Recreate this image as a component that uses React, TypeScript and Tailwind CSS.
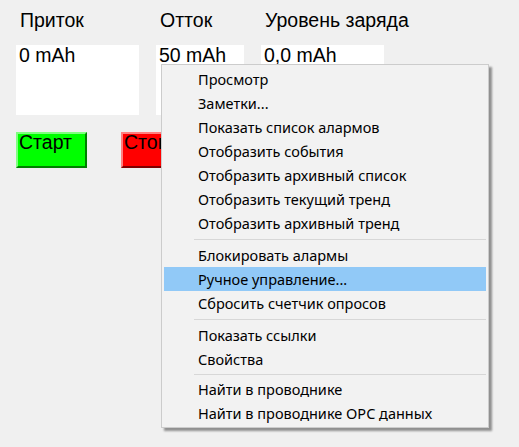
import React from 'react';

type Entry = { label: string; active?: boolean } | { sep: number };

const menu: Entry[] = [
  { label: 'Просмотр' },
  { label: 'Заметки...' },
  { label: 'Показать список алармов' },
  { label: 'Отобразить события' },
  { label: 'Отобразить архивный список' },
  { label: 'Отобразить текущий тренд' },
  { label: 'Отобразить архивный тренд' },
  { sep: 8 },
  { label: 'Блокировать алармы' },
  { label: 'Ручное управление...', active: true },
  { label: 'Сбросить счетчик опросов' },
  { sep: 8 },
  { label: 'Показать ссылки' },
  { label: 'Свойства' },
  { sep: 6 },
  { label: 'Найти в проводнике' },
  { label: 'Найти в проводнике OPC данных' },
];

const ContextMenu: React.FC = () => (
  <div
    className="absolute left-[161px] top-[64px] w-[328px] border border-[#cccccc] bg-[#f2f2f2] p-[2px] shadow-[3px_3px_2px_rgba(0,0,0,0.4)]"
    style={{ fontFamily: '"Noto Sans", sans-serif' }}
  >
    {menu.map((item, i) =>
      'sep' in item ? (
        <div key={i} className="flex items-center pl-[30px]" style={{ height: item.sep }}>
          <div className="h-px w-full bg-[#d7d7d7]" />
        </div>
      ) : (
        <div
          key={i}
          className={`flex h-[24px] items-center pl-[34px] pt-[2px] text-[14.5px] text-black ${
            item.active ? 'bg-[#91c9f7]' : ''
          }`}
        >
          {item.label}
        </div>
      )
    )}
  </div>
);

export default function App() {
  return (
    <div
      className="relative h-[447px] w-[519px] overflow-hidden bg-[#f0f0f0] text-black"
      style={{ fontFamily: '"Liberation Sans", Arial, sans-serif' }}
    >
      <div className="flex gap-[17px] pl-[16px] pt-[8px]">
        {/* Приток */}
        <div className="flex w-[123px] flex-col">
          <div className="h-[37px] pl-[4px] text-[19.5px] leading-[24px]">Приток</div>
          <div className="h-[70px] bg-white pl-[3px] text-[19.5px] leading-[20px]">0 mAh</div>
          <div className="mt-[17px] h-[36px] w-[71px] border-2 border-t-[#80ff80] border-l-[#80ff80] border-b-[#008000] border-r-[#008000] bg-[#00ff00] pl-[1px] text-[19.5px] leading-[17px]">
            Старт
          </div>
        </div>
        {/* Отток */}
        <div className="flex w-[88px] flex-col">
          <div className="h-[37px] pl-[4px] text-[19.5px] leading-[24px]">Отток</div>
          <div className="h-[70px] bg-white pl-[3px] text-[19.5px] leading-[20px]">50 mAh</div>
          <div className="-ml-[35px] mt-[17px] h-[36px] w-[71px] border-2 border-t-[#ff8080] border-l-[#ff8080] border-b-[#800000] border-r-[#800000] bg-[#ff0000] pl-[1px] text-[19.5px] leading-[17px]">
            Стоп
          </div>
        </div>
        {/* Уровень заряда */}
        <div className="flex w-[123px] flex-col">
          <div className="h-[37px] whitespace-nowrap pl-[4px] text-[19.5px] leading-[24px]">Уровень заряда</div>
          <div className="h-[70px] bg-white pl-[3px] text-[19.5px] leading-[20px]">0,0 mAh</div>
        </div>
      </div>
      <ContextMenu />
    </div>
  );
}
